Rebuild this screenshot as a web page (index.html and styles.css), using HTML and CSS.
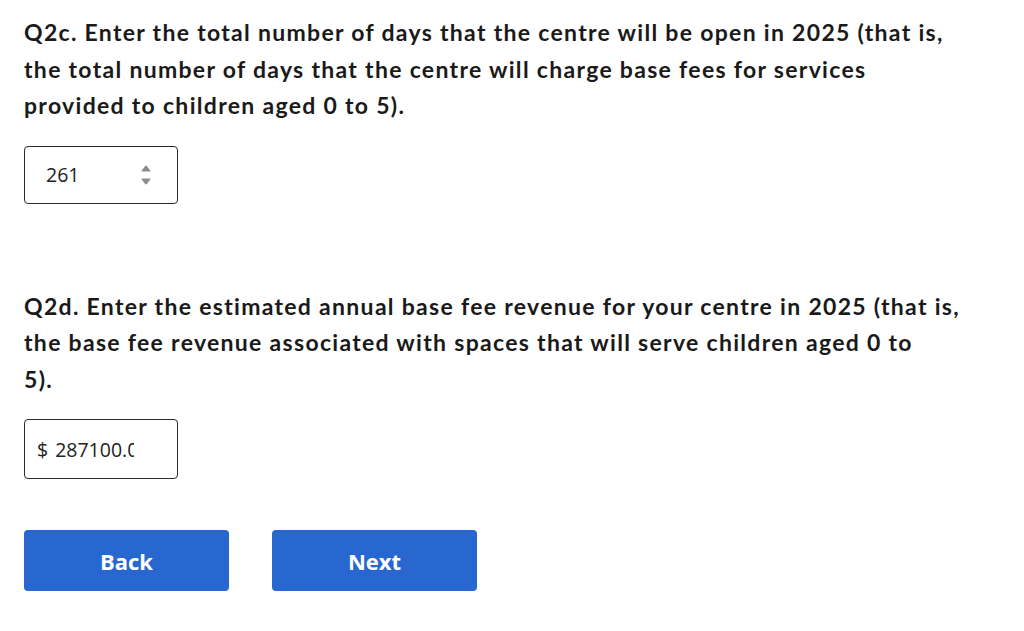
FILE: index.html
```html
<!DOCTYPE html>
<html lang="en">
<head>
<meta charset="utf-8">
<title>Survey</title>
<link rel="stylesheet" href="styles.css">
</head>
<body>
<main class="page">
  <section class="question q-first">
    <h2 class="q-title">Q2c. Enter the total number of days that the centre will be open in 2025 (that is,<br>the total number of days that the centre will charge base fees for services<br>provided to children aged 0 to 5).</h2>
    <div class="field field-number">
      <span class="field-value">261</span>
      <svg class="spinner" width="12" height="24" viewBox="0 0 12 24" aria-hidden="true">
        <path d="M6 2.5 Q6.5 2.5 7 3.2 L10.3 7.6 Q10.8 8.6 9.8 8.6 L2.2 8.6 Q1.2 8.6 1.7 7.6 L5 3.2 Q5.5 2.5 6 2.5 Z" fill="#8c8c8c"/>
        <path d="M2.2 15.4 L9.8 15.4 Q10.8 15.4 10.3 16.4 L7 20.8 Q6.5 21.5 6 21.5 Q5.5 21.5 5 20.8 L1.7 16.4 Q1.2 15.4 2.2 15.4 Z" fill="#8c8c8c"/>
      </svg>
    </div>
  </section>
  <section class="question q-second">
    <h2 class="q-title">Q2d. Enter the estimated annual base fee revenue for your centre in 2025 (that is,<br>the base fee revenue associated with spaces that will serve children aged 0 to<br>5).</h2>
    <div class="field field-money">
      <span class="currency">$</span>
      <span class="field-clip"><span class="field-value">287100.00</span></span>
    </div>
  </section>
  <div class="actions">
    <button class="btn" type="button">Back</button>
    <button class="btn" type="button">Next</button>
  </div>
</main>
</body>
</html>
```
FILE: styles.css
```css
html, body {
  margin: 0;
  padding: 0;
  background: #ffffff;
}
.page {
  padding: 14px 24px 0 24px;
  width: 976px;
}
.q-title {
  margin: 0;
  font-family: "Lato", "Open Sans", sans-serif;
  font-weight: 700;
  font-size: 23px;
  line-height: 36.5px;
  color: #1a1a1a;
  letter-spacing: 1.3px;
  white-space: nowrap;
}
.field {
  box-sizing: border-box;
  width: 154px;
  height: 58px;
  border: 1.5px solid #2b2b2b;
  border-radius: 4px;
  display: flex;
  align-items: center;
  font-family: "Open Sans", sans-serif;
  font-size: 19.5px;
  color: #222;
}
.q-first .field {
  margin-top: 22px;
}
.field-number {
  padding: 0 25px 0 21px;
  justify-content: space-between;
}
.spinner {
  display: block;
}
.q-second {
  margin-top: 84px;
}
.q-second .field {
  margin-top: 22px;
  height: 60px;
  padding-left: 12px;
}
.currency {
  margin-right: 7px;
}
.field-clip {
  display: block;
  width: 79px;
  overflow: hidden;
  white-space: nowrap;
}
.actions {
  display: flex;
  gap: 43px;
  margin-top: 51px;
}
.btn {
  width: 205px;
  height: 61px;
  border: none;
  border-radius: 4px;
  background: #2867cf;
  color: #ffffff;
  font-family: "Open Sans", sans-serif;
  font-weight: 700;
  font-size: 22px;
  padding: 0;
  cursor: pointer;
}
```
